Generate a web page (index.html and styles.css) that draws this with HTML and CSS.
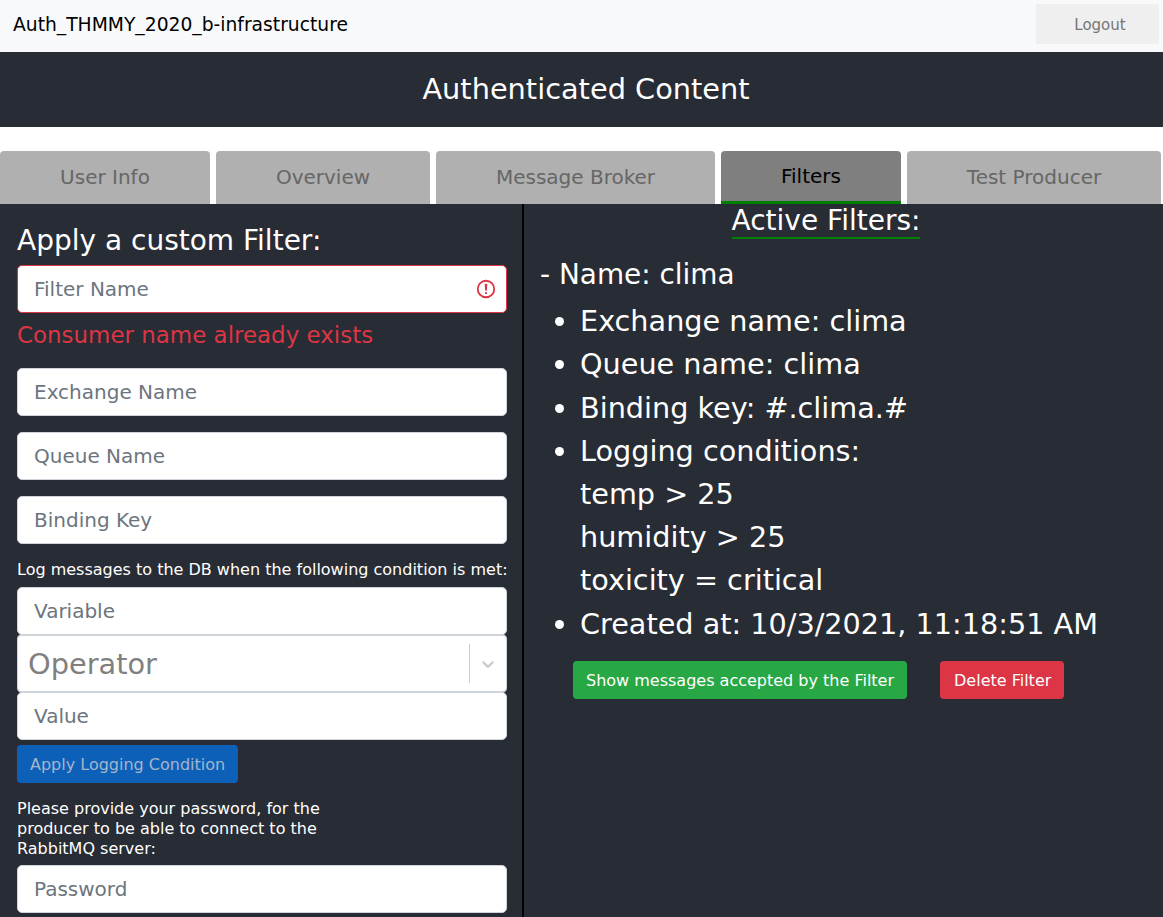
FILE: index.html
```html
<!doctype html>
<html lang="en">
<head>
    <meta charset="UTF-8">
    <title>Auth_THMMY_2020_b-infrastructure</title>
    <link rel="stylesheet" href="styles.css">
</head>
<body>

<!-- Top bar -->
<nav class="navbar">
    <span class="brand">Auth_THMMY_2020_b-infrastructure</span>
    <button class="logout-btn">Logout</button>
</nav>

<header class="app-header">Authenticated Content</header>

<!-- Tabs -->
<div class="tabs">
    <button class="tab tab-user">User Info</button>
    <button class="tab tab-overview">Overview</button>
    <button class="tab tab-broker">Message Broker</button>
    <button class="tab tab-filters active">Filters</button>
    <button class="tab tab-producer">Test Producer</button>
</div>

<main class="content">
    <!-- Filter form -->
    <section class="form-panel">
        <h2 class="form-title">Apply a custom Filter:</h2>
        <div class="input-invalid">
            <input class="field field-invalid" placeholder="Filter Name">
            <svg class="invalid-icon" viewBox="0 0 12 12" width="22" height="22" fill="none" stroke="#dc3545">
                <circle cx="6" cy="6" r="4.5"/>
                <path stroke-linejoin="round" d="M5.8 3.6h.4L6 6.5z"/>
                <circle cx="6" cy="8.2" r=".6" fill="#dc3545" stroke="none"/>
            </svg>
        </div>
        <p class="error-text">Consumer name already exists</p>
        <input class="field field-spaced" placeholder="Exchange Name">
        <input class="field field-spaced" placeholder="Queue Name">
        <input class="field field-spaced" placeholder="Binding Key">
        <p class="hint hint-log">Log messages to the DB when the following condition is met:</p>
        <input class="field" placeholder="Variable">
        <div class="select">
            <span class="select-value">Operator</span>
            <span class="select-sep"></span>
            <svg class="select-arrow" viewBox="0 0 20 20" width="20" height="20" fill="#ccc">
                <path d="M4.516 7.548c.436-.446 1.043-.481 1.576 0L10 11.295l3.908-3.747c.533-.481 1.141-.446 1.574 0 .436.445.408 1.197 0 1.615-.406.418-4.695 4.502-4.695 4.502a1.095 1.095 0 0 1-1.576 0S4.924 9.581 4.516 9.163s-.436-1.17 0-1.615z"/>
            </svg>
        </div>
        <input class="field" placeholder="Value">
        <button class="btn btn-apply">Apply Logging Condition</button>
        <p class="hint hint-password">Please provide your password, for the producer to be able to connect to the RabbitMQ server:</p>
        <input class="field" type="password" placeholder="Password">
    </section>

    <!-- Active filters -->
    <section class="filters-panel">
        <div class="filters-heading"><span class="filters-title">Active Filters:</span></div>
        <p class="filter-name">- Name: clima</p>
        <ul class="filter-info">
            <li>Exchange name: clima</li>
            <li>Queue name: clima</li>
            <li>Binding key: #.clima.#</li>
            <li>Logging conditions:<br>temp &gt; 25<br>humidity &gt; 25<br>toxicity = critical</li>
            <li>Created at: 10/3/2021, 11:18:51 AM</li>
        </ul>
        <div class="filter-actions">
            <button class="btn btn-show">Show messages accepted by the Filter</button>
            <button class="btn btn-delete">Delete Filter</button>
        </div>
    </section>
</main>

</body>
</html>
```

FILE: styles.css
```css
* {
    box-sizing: border-box;
}
html, body {
    height: 100%;
}
body {
    margin: 0;
    overflow: hidden;
    font-family: "DejaVu Sans", sans-serif;
    background-color: #fff;
    color: #212529;
}
button {
    font-family: inherit;
    border: none;
}
.navbar {
    display: flex;
    align-items: flex-start;
    justify-content: space-between;
    height: 52px;
    padding: 4px 4px 0 13px;
    background-color: #f8f9fa;
}
.brand {
    font-size: 18.72px;
    line-height: 42px;
    color: #000;
}
.logout-btn {
    width: 123px;
    height: 40px;
    padding: 1px 0 0 5px;
    background-color: #efefef;
    color: #757575;
    font-size: 15px;
    border-radius: 2px;
}
.app-header {
    height: 75px;
    padding-left: 9px;
    background-color: #282c34;
    color: #fff;
    font-size: 28.8px;
    line-height: 74px;
    text-align: center;
}
.tabs {
    display: flex;
    gap: 6px;
    margin-top: 24px;
    height: 53px;
}
.tab {
    height: 53px;
    padding: 0 0 1px;
    background-color: #b0b0b0;
    color: #666;
    font-size: 20px;
    border-radius: 4px 4px 0 0;
}
.tab-user { width: 210px; }
.tab-overview { width: 214px; }
.tab-broker { width: 279px; }
.tab-filters { width: 180px; }
.tab-producer { width: 254px; }
.tab.active {
    background-color: #7f7f7f;
    color: #000;
    border-bottom: 3px solid green;
}
.content {
    display: flex;
    height: 800px;
    background-color: #282c34;
    color: #fff;
}
.form-panel {
    width: 524px;
    flex-shrink: 0;
    padding: 19px 15px 0 17px;
    border-right: 2px solid #000;
}
.form-title {
    margin: 0 0 6px;
    font-size: 28px;
    font-weight: 400;
    line-height: 36px;
}
.field {
    display: block;
    width: 100%;
    height: 48px;
    padding: 8px 16px;
    font-family: inherit;
    font-size: 20px;
    color: #495057;
    background-color: #fff;
    border: 1px solid #ced4da;
    border-radius: 5px;
    outline: none;
}
.field::placeholder {
    color: #6c757d;
    opacity: 1;
}
.field-spaced {
    margin-bottom: 16px;
}
.input-invalid {
    position: relative;
}
.field-invalid {
    border-color: #dc3545;
}
.invalid-icon {
    position: absolute;
    top: 13px;
    right: 10px;
}
.error-text {
    margin: 9px 0 19px;
    font-size: 22.95px;
    line-height: 27px;
    color: #dc3545;
}
.hint {
    margin: 0;
    font-size: 16px;
    line-height: 20px;
}
.hint-log {
    margin: 0 0 7px;
    white-space: nowrap;
}
.hint-password {
    width: 320px;
    margin: 16px 0 6px;
}
.select {
    display: flex;
    align-items: center;
    height: 59px;
    padding-left: 10px;
    background-color: #fff;
    border: 2px solid #ced4da;
    border-left-width: 1px;
    border-right-width: 1px;
    border-radius: 5px;
    margin: -1px 0;
}
.select-value {
    flex: 1;
    font-size: 28.8px;
    color: #808080;
}
.select-sep {
    width: 1px;
    height: 39px;
    background-color: #ccc;
}
.select-arrow {
    margin: 0 8px;
}
.btn {
    height: 38px;
    padding: 0 13px;
    font-size: 16px;
    color: #fff;
    border-radius: 4px;
}
.btn-apply {
    display: block;
    margin-top: 5px;
    background-color: #0d60b8;
    color: #a3b5cc;
}
.btn-show {
    padding-top: 2px;
    background-color: #28a745;
}
.btn-delete {
    padding: 2px 13px 0 14px;
    background-color: #dc3545;
}
.filters-panel {
    flex: 1;
    padding: 0 16px;
}
.filters-heading {
    text-align: center;
    padding-right: 35px;
}
.filters-title {
    display: inline-block;
    padding-top: 1px;
    padding-bottom: 1px;
    font-size: 28px;
    line-height: 31px;
    border-bottom: 2px solid green;
}
.filter-name {
    margin: 18px 0 0;
    font-size: 27.9px;
    line-height: 35px;
}
.filter-info {
    margin: 8.2px 0 0;
    padding-left: 40px;
    font-size: 28.7px;
    line-height: 43.2px;
}
.filter-actions {
    display: flex;
    gap: 33px;
    margin: 14.8px 0 0 33px;
}
```
